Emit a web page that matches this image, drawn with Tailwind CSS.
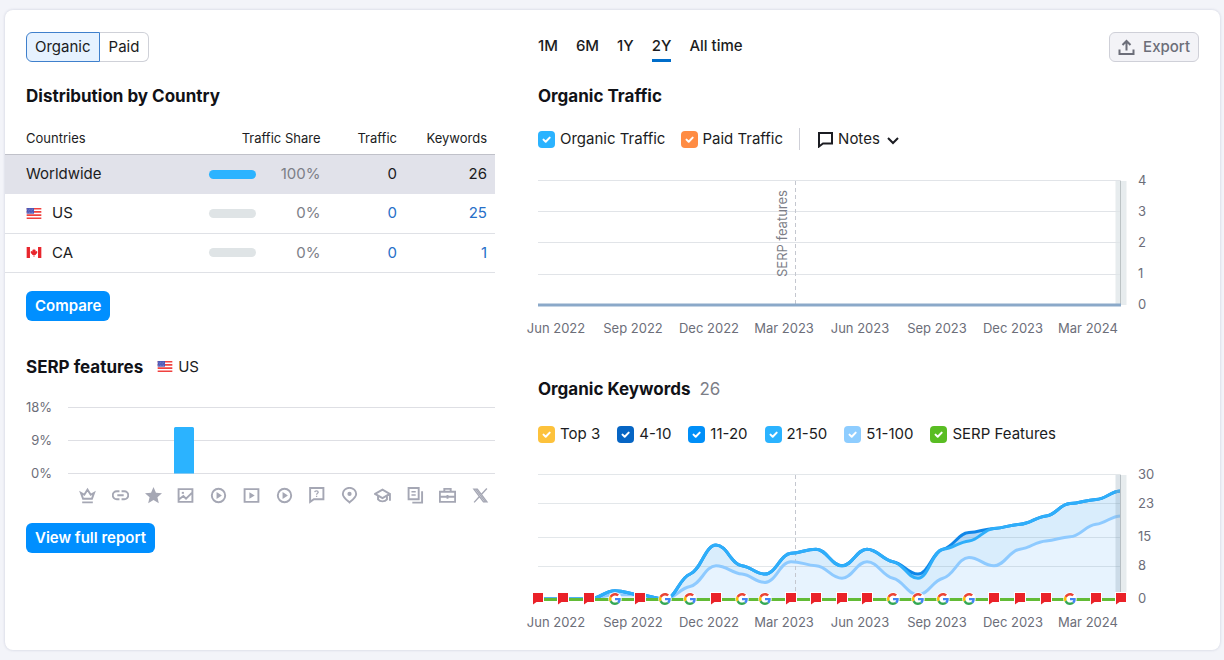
<!DOCTYPE html>
<html lang="en">
<head>
<meta charset="utf-8">
<meta name="viewport" content="width=device-width, initial-scale=1">
<title>Organic Research Overview</title>
<script src="https://cdn.jsdelivr.net/npm/@tailwindcss/browser@4"></script>
</head>
<body class="min-h-screen bg-[#f3f4f9] pt-[10px] pr-1 pb-[10px] pl-[5px] font-['Inter',sans-serif] text-[15px] leading-5 text-[#1b1c22]">

<svg class="hidden" aria-hidden="true">
  <symbol id="us" viewBox="0 0 16 12">
    <path fill="#fff" d="M0 0h16v12H0z"/>
    <path fill="#f0413f" d="M0 0h16v1.7H0zM0 3.4h16v1.7H0zM0 6.9h16v1.7H0zM0 10.3h16V12H0z"/>
    <path fill="#4a55b5" d="M0 0h8v6.2H0z"/>
    <path stroke="#a9aee0" stroke-width=".7" stroke-dasharray=".7 1" d="M1 1.4h6.5M1.6 3.1h5.6M1 4.8h6.5"/>
  </symbol>
  <symbol id="ca" viewBox="0 0 16 12">
    <path fill="#fff" d="M0 0h16v12H0z"/>
    <path fill="#e8262d" d="M0 0h3.6v12H0zM12.4 0H16v12h-3.600zM8 1.800l.9 1.500.9-.3-.2 1.900 1.200-.5.900.9-.4.6.5.5-2 1.700.1.700-1.500-.1V11h-.8V8.700l-1.500.1.1-.7-2-1.700.5-.5-.4-.6.900-.9 1.200.5-.2-1.900.9.3z"/>
  </symbol>
  <symbol id="check" viewBox="0 0 17 17">
    <path d="m5.500 8.600 2.200 2.200L11.700 6.600" fill="none" stroke="#fff" stroke-width="2" stroke-linecap="round" stroke-linejoin="round"/>
  </symbol>
  <symbol id="flag" viewBox="0 0 12 12" overflow="visible">
    <path d="M0 0h12v11H5l-4 2.500H0z" fill="#fff"/>
    <path d="M1 1h10v9H4.500L1 12.500z" fill="#ea2128"/>
  </symbol>
  <symbol id="google" viewBox="-4 -4 56 56">
    <circle cx="24" cy="24" r="27" fill="#fff"/>
    <path fill="#EA4335" d="M24 9.500c3.540 0 6.710 1.220 9.210 3.600l6.850-6.850C35.900 2.380 30.470 0 24 0 14.620 0 6.510 5.380 2.560 13.220l7.980 6.190C12.430 13.720 17.740 9.500 24 9.500z"/>
    <path fill="#4285F4" d="M46.980 24.550c0-1.570-.15-3.090-.38-4.550H24v9.020h12.940c-.58 2.960-2.260 5.480-4.780 7.180l7.730 6c4.510-4.180 7.090-10.360 7.090-17.650z"/>
    <path fill="#FBBC05" d="M10.530 28.590c-.48-1.450-.76-2.990-.76-4.590s.27-3.140.76-4.590l-7.980-6.190C.92 16.460 0 20.120 0 24s.92 7.540 2.560 10.780l7.970-6.190z"/>
    <path fill="#34A853" d="M24 48c6.480 0 11.930-2.130 15.890-5.810l-7.730-6c-2.150 1.450-4.920 2.300-8.160 2.300-6.260 0-11.570-4.220-13.470-9.910l-7.980 6.190C6.510 42.620 14.620 48 24 48z"/>
  </symbol>
</svg>

<main class="grid grid-cols-[490fr_725fr] rounded-lg bg-white pb-4 shadow-[0_0_3px_rgba(30,40,90,0.18)]">

  <!-- Left column: countries and SERP features -->
  <section class="min-w-0">
    <div class="flex px-[21px] pt-[22px]">
      <button class="h-[30px] rounded-l-md border border-[#3f80cc] bg-[#e6f2ff] px-2">Organic</button>
      <button class="h-[30px] rounded-r-md border border-l-0 border-[#cfd1d8] px-[9px]">Paid</button>
    </div>
    <h2 class="mt-[22px] px-[21px] text-[17px] leading-6 font-bold text-[#111217]">Distribution by Country</h2>

    <table class="mt-4 w-full table-fixed border-collapse">
      <thead>
        <tr class="h-[30px] border-b border-[#c0c1c9] text-[13px]">
          <th scope="col" class="w-[40%] pb-[2px] pl-[21px] text-left font-normal">Countries</th>
          <th scope="col" class="w-[25%] pr-[3px] pb-[2px] text-right font-normal">Traffic Share</th>
          <th scope="col" class="w-[15%] pb-[2px] text-right font-normal">Traffic</th>
          <th scope="col" class="w-[20%] pr-2 pb-[2px] text-right font-normal">Keywords</th>
        </tr>
      </thead>
      <tbody>
        <tr class="h-10 bg-[#e1e2ea]">
          <td class="pl-[21px]">Worldwide</td>
          <td class="pr-[3px]"><div class="flex items-center justify-end"><span class="h-[9px] w-[47px] rounded-full bg-[#2bb3ff]"></span><span class="w-[65px] text-right text-[#7c7e87]">100%</span></div></td>
          <td class="text-right">0</td>
          <td class="pr-2 text-right">26</td>
        </tr>
        <tr class="h-[39px] border-b border-[#dfe1e6]">
          <td class="pl-[21px]"><div class="flex items-center gap-[10px]"><svg class="h-[11px] w-4"><use href="#us"/></svg>US</div></td>
          <td class="pr-[3px]"><div class="flex items-center justify-end"><span class="h-[9px] w-[47px] rounded-full bg-[#dfe4e6]"></span><span class="w-[65px] text-right text-[#7c7e87]">0%</span></div></td>
          <td class="text-right"><a href="#" class="text-[#2770c8]">0</a></td>
          <td class="pr-2 text-right"><a href="#" class="text-[#2770c8]">25</a></td>
        </tr>
        <tr class="h-[39px] border-b border-[#dfe1e6]">
          <td class="pl-[21px]"><div class="flex items-center gap-[10px]"><svg class="h-[11px] w-4"><use href="#ca"/></svg>CA</div></td>
          <td class="pr-[3px]"><div class="flex items-center justify-end"><span class="h-[9px] w-[47px] rounded-full bg-[#dfe4e6]"></span><span class="w-[65px] text-right text-[#7c7e87]">0%</span></div></td>
          <td class="text-right"><a href="#" class="text-[#2770c8]">0</a></td>
          <td class="pr-2 text-right"><a href="#" class="text-[#2770c8]">1</a></td>
        </tr>
      </tbody>
    </table>

    <div class="mt-[18px] px-[21px]"><button class="h-[30px] rounded-md bg-[#008fff] px-[9px] font-semibold text-white">Compare</button></div>

    <div class="mt-[34px] flex items-center px-[21px]">
      <h2 class="text-[17px] leading-6 font-bold text-[#111217]">SERP features</h2>
      <svg class="ml-[14px] h-[11px] w-4"><use href="#us"/></svg>
      <span class="ml-[5px]">US</span>
    </div>

    <svg class="mt-5 block w-full" viewBox="5 399 490 82" role="img" aria-label="SERP features share">
      <path d="M68 407.500h427M68 440.500h427M68 473.500h427" stroke="#dedfe4"/>
      <path d="M174 473.500V428.500a1.500 1.500 0 0 1 1.500-1.500h17a1.500 1.500 0 0 1 1.500 1.500v45z" fill="#2bb3ff"/>
      <g class="text-[13px]" fill="#6c6e79" text-anchor="end">
        <text x="52" y="412">18%</text><text x="52" y="445">9%</text><text x="52" y="478">0%</text>
      </g>
    </svg>

    <div class="mt-[6px] flex justify-between pr-[6px] pl-[74px] text-[#a5a7b4] [&>svg]:size-[17px] [&>svg]:fill-none [&>svg]:stroke-current [&>svg]:stroke-[1.8]">
      <svg viewBox="0 0 16 16"><path d="M3.800 11 1.800 5.500 5 7.300 8 2.500l3 4.800 3.200-1.800-2 5.500zM3 14.500h10"/></svg>
      <svg viewBox="0 0 16 16"><path d="M7 4H4.500a3.800 3.800 0 0 0 0 7.600H7M9 4h2.500a3.800 3.800 0 0 1 0 7.600H9M5 7.800h6"/></svg>
      <svg viewBox="0 0 16 16"><path fill="currentColor" stroke="none" d="m8 0 2.300 5.300 5.700.5-4.300 3.800 1.300 5.700L8 12.300l-5 3 1.300-5.700L0 5.800l5.700-.5z"/></svg>
      <svg viewBox="0 0 16 16"><path d="M1.500 2h13v12h-13zM2 11.500l4-3 2.500 2.500 5.500-5.500"/><path d="M4.500 5.500h2"/></svg>
      <svg viewBox="0 0 16 16"><circle cx="8" cy="8" r="6.300"/><path fill="currentColor" stroke="none" d="m6.200 4.800 5 3.200-5 3.200z"/></svg>
      <svg viewBox="0 0 16 16"><path d="M1.500 2h13v12h-13z"/><path fill="currentColor" stroke="none" d="m6 5 5 3-5 3z"/></svg>
      <svg viewBox="0 0 16 16"><circle cx="8" cy="8" r="6.300"/><path fill="currentColor" stroke="none" d="m6.200 4.800 5 3.200-5 3.200z"/></svg>
      <svg viewBox="0 0 16 16"><path d="M2 1h12.500v10.500H5.500L2 14z"/><path stroke-width="1.200" d="M6.300 4.800c.2-1.500 3.300-1.500 3.300.1 0 1.100-1.500 1.100-1.500 2.400M8.100 8.300v1.200"/></svg>
      <svg viewBox="0 0 16 16"><path d="M8 14.500C5 12 1.700 9.500 1.700 6.500a6.300 5.700 0 0 1 12.600 0c0 3-3.300 5.500-6.300 8z"/><circle cx="8" cy="6.500" r="2" fill="currentColor" stroke="none"/></svg>
      <svg viewBox="0 0 16 16"><path d="M1 6.500 8 2.500l6.800 4L8 10.500zM3.800 8.500v3.200c2 2.400 6.400 2.400 8.400 0V8.500M15 6.500V13"/></svg>
      <svg viewBox="0 0 16 16"><path d="M1.500 1H11v10.500H1.500zM14.200 4v10.700H5"/><path stroke-width="1.400" d="M4.200 4.500h4M4.200 7.500h4"/></svg>
      <svg viewBox="0 0 16 16"><path d="M.8 4.500h14.400V14H.8zM5 4.500V1.800h6v2.700M1 9.200h14M8 7.500v3.500"/></svg>
      <svg viewBox="0 0 16 16"><path stroke-width="1.300" d="M1.800 2h3.200l9 12h-3.200zM14 1.500 9 6.900M6.800 9.200 2 14.500"/><path stroke-width="1.200" d="m3.500 2 9 12"/></svg>
    </div>

    <div class="mt-[19px] px-[21px]"><button class="h-[30px] rounded-md bg-[#008fff] px-[9px] font-semibold text-white">View full report</button></div>
  </section>

  <!-- Right column: traffic and keyword trends -->
  <section class="min-w-0 pt-[22px] pr-[21px] pl-[43px]">
    <div class="flex items-start justify-between">
      <div class="flex gap-[18px] font-medium">
        <button class="h-[30px] border-b-[3px] border-transparent">1M</button>
        <button class="h-[30px] border-b-[3px] border-transparent">6M</button>
        <button class="h-[30px] border-b-[3px] border-transparent">1Y</button>
        <button class="h-[30px] border-b-[3px] border-[#006dca]">2Y</button>
        <button class="h-[30px] border-b-[3px] border-transparent">All time</button>
      </div>
      <button class="flex h-[30px] items-center gap-2 rounded-md border border-[#cfd0d8] bg-[#f3f3f7] px-2 font-medium text-[#6c6e79]">
        <svg class="size-[17px] fill-none stroke-current stroke-2" viewBox="0 0 17 17"><path d="M1.500 10.500v4.500h14v-4.500M8.500 11.500V2.500M4.500 6l4-4 4 4"/></svg>Export</button>
    </div>

    <h2 class="mt-[22px] text-[17px] leading-6 font-bold text-[#111217]">Organic Traffic</h2>
    <div class="mt-[21px] flex items-center gap-4">
      <label class="flex items-center gap-[5px]"><span class="grid"><input type="checkbox" checked class="col-start-1 row-start-1 size-[17px] appearance-none rounded bg-[#2bb3ff]"><svg class="pointer-events-none col-start-1 row-start-1 size-[17px]"><use href="#check"/></svg></span>Organic Traffic</label>
      <label class="flex items-center gap-1"><span class="grid"><input type="checkbox" checked class="col-start-1 row-start-1 size-[17px] appearance-none rounded bg-[#ff8c43]"><svg class="pointer-events-none col-start-1 row-start-1 size-[17px]"><use href="#check"/></svg></span>Paid Traffic</label>
      <span class="-my-1 h-[22px] w-px bg-[#cfd0d8]"></span>
      <button class="ml-px flex items-center"><svg class="mr-1 size-[17px] fill-none stroke-current stroke-2" viewBox="0 0 17 17"><path d="M2 2h13v10.500H6L2 15.500z"/></svg>Notes<svg class="ml-[7px] h-[13px] w-3 fill-none stroke-current stroke-2" viewBox="0 0 12 13"><path d="m1 5 5 5 5-5"/></svg></button>
    </div>

    <svg class="mt-[23px] block w-full overflow-visible" viewBox="538 172 661 168" role="img" aria-label="Organic traffic trend">
      <path d="M538 180.500h583M538 211.500h583M538 242.500h583M538 274.500h583" stroke="#e1e4e8"/>
      <path d="M1115.500 181h11v124h-11z" fill="#dfe6e8" fill-opacity=".75"/>
      <path d="M1120.500 181v124" stroke="#bcc3c5"/>
      <path d="M795.500 181v124" stroke="#c4c7cf" stroke-dasharray="4 3"/>
      <path d="M538 305h583" stroke="#8ba9c9" stroke-width="3"/>
      <text class="text-[13px]" fill="#7c7e87" transform="translate(787 277) rotate(-90)">SERP features</text>
      <g class="text-[13px]" fill="#6c6e79">
        <text x="1138" y="185">4</text><text x="1138" y="216">3</text><text x="1138" y="247">2</text><text x="1138" y="278">1</text><text x="1138" y="309">0</text>
      </g>
      <g class="text-[13px]" fill="#6c6e79" text-anchor="middle">
        <text x="556" y="333">Jun 2022</text><text x="633" y="333">Sep 2022</text><text x="709" y="333">Dec 2022</text><text x="784" y="333">Mar 2023</text><text x="860" y="333">Jun 2023</text><text x="937" y="333">Sep 2023</text><text x="1013" y="333">Dec 2023</text><text x="1088" y="333">Mar 2024</text>
      </g>
    </svg>

    <h2 class="mt-[37px] flex gap-[9px] text-[17px] leading-6 font-bold text-[#111217]">Organic Keywords <span class="font-normal text-[#7c7e87]">26</span></h2>
    <div class="mt-[23px] flex items-center gap-[17px]">
      <label class="flex items-center gap-[5px]"><span class="grid"><input type="checkbox" checked class="col-start-1 row-start-1 size-[17px] appearance-none rounded bg-[#fdc23c]"><svg class="pointer-events-none col-start-1 row-start-1 size-[17px]"><use href="#check"/></svg></span>Top 3</label>
      <label class="flex items-center gap-[5px]"><span class="grid"><input type="checkbox" checked class="col-start-1 row-start-1 size-[17px] appearance-none rounded bg-[#0665c4]"><svg class="pointer-events-none col-start-1 row-start-1 size-[17px]"><use href="#check"/></svg></span>4-10</label>
      <label class="flex items-center gap-[5px]"><span class="grid"><input type="checkbox" checked class="col-start-1 row-start-1 size-[17px] appearance-none rounded bg-[#008ff8]"><svg class="pointer-events-none col-start-1 row-start-1 size-[17px]"><use href="#check"/></svg></span>11-20</label>
      <label class="flex items-center gap-[5px]"><span class="grid"><input type="checkbox" checked class="col-start-1 row-start-1 size-[17px] appearance-none rounded bg-[#2bb3ff]"><svg class="pointer-events-none col-start-1 row-start-1 size-[17px]"><use href="#check"/></svg></span>21-50</label>
      <label class="flex items-center gap-[5px]"><span class="grid"><input type="checkbox" checked class="col-start-1 row-start-1 size-[17px] appearance-none rounded bg-[#8ecdff]"><svg class="pointer-events-none col-start-1 row-start-1 size-[17px]"><use href="#check"/></svg></span>51-100</label>
      <label class="flex items-center gap-[5px]"><span class="grid"><input type="checkbox" checked class="col-start-1 row-start-1 size-[17px] appearance-none rounded bg-[#59bd23]"><svg class="pointer-events-none col-start-1 row-start-1 size-[17px]"><use href="#check"/></svg></span>SERP Features</label>
    </div>

    <svg class="mt-[22px] block w-full overflow-visible" viewBox="538 466 661 168" role="img" aria-label="Organic keywords trend">
      <path id="area-top" fill="#b4d8f7"/>
      <path id="area-mid" fill="#d9edfc"/>
      <path id="area-low" fill="#e7f3fe"/>
      <path d="M538 474.500h583M538 503.500h583M538 537.500h583M538 566.500h583" stroke="#5a6e85" stroke-opacity=".17"/>
      <path d="M795.500 475v124" stroke="#c4c7cf" stroke-dasharray="4 3"/>
      <g fill="none" stroke-width="3">
        <path id="line-low" stroke="#8ecaff"/>
        <path id="line-top" stroke="#0f86e8"/>
        <path id="line-mid" stroke="#2eaefa"/>
      </g>
      <path d="M1115.500 475h5.500v124h-5.500z" fill="#8fa6b5" fill-opacity=".3"/>
      <path d="M1121 475h5.500v124h-5.500z" fill="#e7ecee"/>
      <path d="M1120.500 475v124" stroke="#b6bec3"/>
      <path d="M538 599.500h583" stroke="#62bb36" stroke-width="3"/>
      <g id="markers"></g>
      <g class="text-[13px]" fill="#6c6e79">
        <text x="1138" y="479">30</text><text x="1138" y="508">23</text><text x="1138" y="541">15</text><text x="1138" y="570">8</text><text x="1138" y="603">0</text>
      </g>
      <g class="text-[13px]" fill="#6c6e79" text-anchor="middle">
        <text x="556" y="627">Jun 2022</text><text x="633" y="627">Sep 2022</text><text x="709" y="627">Dec 2022</text><text x="784" y="627">Mar 2023</text><text x="860" y="627">Jun 2023</text><text x="937" y="627">Sep 2023</text><text x="1013" y="627">Dec 2023</text><text x="1088" y="627">Mar 2024</text>
      </g>
    </svg>
  </section>
</main>

<script>
  // Monthly keyword counts; months are placed by date.
  const xs  = [538,563,589,615,640,665,690,716,742,765,791,816,842,867,893,918,943,969,994,1020,1046,1070,1096,1121];
  const series = {
    top: [0,0,0,2,1,0,6,13,8,6,11,12,8,12,9,6,12,16,17,18,20,23,24,26],
    mid: [0,0,0,2,1,0,6,13,8,6,11,12,8,12,9,5,12,14,17,18,20,23,24,26],
    low: [0,0,0,1,1,0,3,8,6,4,9,8,5,9,5,1,5,10,8,12,14,15,18,20]
  };
  // F: note flag, G: Google update
  const kinds = "FFFGFGGFGGFFFFGGGGFFFGFF";
  const Y = v => 599 - v * 4.15;

  function curve(vals) {
    const ys = vals.map(Y), n = xs.length, s = [], m = [];
    for (let i = 0; i < n - 1; i++) s.push((ys[i + 1] - ys[i]) / (xs[i + 1] - xs[i]));
    for (let i = 0; i < n; i++) {
      if (i === 0 || i === n - 1) { m.push(0); continue; }
      const a = s[i - 1], b = s[i];
      m.push(a * b <= 0 ? 0 : Math.sign(a) * Math.min(Math.abs(a), Math.abs(b)) / 3);
    }
    let d = `M${xs[0]} ${ys[0]}`;
    for (let i = 0; i < n - 1; i++) {
      const h = (xs[i + 1] - xs[i]) * 0.42;
      d += `C${xs[i] + h} ${ys[i] + m[i] * h} ${xs[i + 1] - h} ${ys[i + 1] - m[i + 1] * h} ${xs[i + 1]} ${ys[i + 1]}`;
    }
    return d;
  }
  for (const [name, vals] of Object.entries(series)) {
    const d = curve(vals);
    document.getElementById("line-" + name).setAttribute("d", d);
    document.getElementById("area-" + name).setAttribute("d", d + "V599H538Z");
  }
  document.getElementById("markers").innerHTML = xs.map((x, i) =>
    kinds[i] === "F" ? `<use href="#flag" x="${x - 6}" y="592" width="12" height="12"/>`
                     : `<use href="#google" x="${x - 7}" y="592" width="14" height="14"/>`).join("");
</script>
</body>
</html>
